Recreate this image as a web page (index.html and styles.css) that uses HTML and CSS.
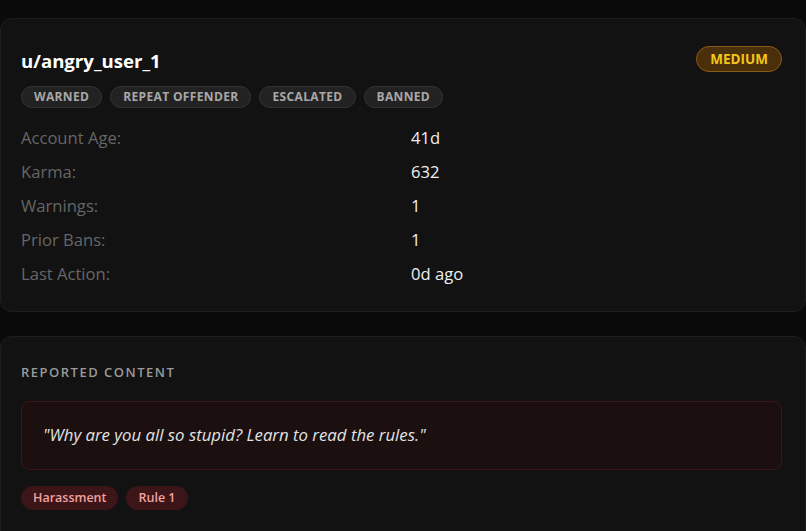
FILE: index.html
```html
<!DOCTYPE html>
<html>
<head>
<meta charset="utf-8">
<link rel="stylesheet" href="styles.css">
</head>
<body>
<div class="page">
  <section class="card user-card">
    <div class="user-head">
      <div class="user-name">u/angry_user_1</div>
      <span class="severity">MEDIUM</span>
    </div>
    <div class="chips">
      <span class="chip">WARNED</span>
      <span class="chip">REPEAT OFFENDER</span>
      <span class="chip">ESCALATED</span>
      <span class="chip">BANNED</span>
    </div>
    <div class="stats">
      <div class="label">Account Age:</div><div class="value">41d</div>
      <div class="label">Karma:</div><div class="value">632</div>
      <div class="label">Warnings:</div><div class="value">1</div>
      <div class="label">Prior Bans:</div><div class="value">1</div>
      <div class="label">Last Action:</div><div class="value">0d ago</div>
    </div>
  </section>
  <section class="card content-card">
    <div class="section-title">REPORTED CONTENT</div>
    <div class="quote">"Why are you all so stupid? Learn to read the rules."</div>
    <div class="tags">
      <span class="tag">Harassment</span>
      <span class="tag">Rule 1</span>
    </div>
  </section>
</div>
</body>
</html>
```
FILE: styles.css
```css
html, body {
  margin: 0;
  padding: 0;
  background: #0a0a0a;
  font-family: "Open Sans", "Noto Sans", sans-serif;
  color: #e8e8e8;
}
.page {
  display: flex;
  flex-direction: column;
  gap: 24px;
  padding: 18px 0 0 0;
  height: 531px;
  box-sizing: border-box;
  overflow: hidden;
}
.card {
  background: #121212;
  border: 1px solid #1e1e1e;
  border-radius: 12px;
  padding: 27px 23px 25px 20px;
  flex-shrink: 0;
}
.user-head {
  display: flex;
  justify-content: space-between;
  align-items: center;
  height: 26px;
}
.user-name {
  font-size: 18.6px;
  font-weight: 700;
  color: #ffffff;
  padding-top: 2px;
}
.severity {
  font-size: 13.5px;
  font-weight: 700;
  color: #f5c518;
  background: #4a300a;
  border: 1px solid #8c5a17;
  border-radius: 13px;
  padding: 0 13px;
  height: 24px;
  line-height: 24px;
}
.chips {
  display: flex;
  gap: 8px;
  margin-top: 14px;
}
.chip {
  font-size: 12px;
  font-weight: 700;
  letter-spacing: 0.35px;
  color: #a8a8a8;
  background: #222222;
  border: 1px solid #333333;
  border-radius: 12px;
  height: 20px;
  line-height: 20px;
  padding: 0 12px;
}
.stats {
  display: grid;
  grid-template-columns: 1fr 1fr;
  column-gap: 19px;
  row-gap: 10px;
  margin-top: 18px;
  font-size: 16.6px;
  line-height: 24px;
}
.label { color: #666666; }
.value { color: #f0f0f0; }
.content-card {
  padding-top: 24px;
  height: 300px;
}
.section-title {
  font-size: 13px;
  font-weight: 600;
  letter-spacing: 1.5px;
  color: #9a9a9a;
  line-height: 22px;
}
.quote {
  margin-top: 18px;
  background: #1b0f10;
  border: 1px solid #3a1618;
  border-radius: 8px;
  padding: 21px 21px 22px;
  font-style: italic;
  font-size: 16.8px;
  line-height: 24px;
  color: #e2e2e2;
}
.tags {
  display: flex;
  gap: 8px;
  margin-top: 16px;
}
.tag {
  font-size: 12.5px;
  font-weight: 600;
  color: #f3a0a0;
  background: #3b1518;
  border-radius: 12px;
  height: 24px;
  line-height: 24px;
  padding: 0 12px;
}
```
